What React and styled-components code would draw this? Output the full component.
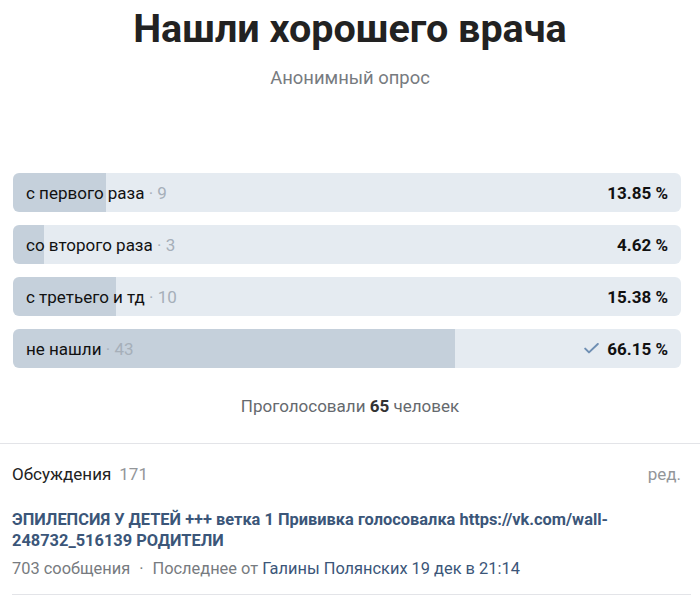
import React from "react";
import styled, { createGlobalStyle } from "styled-components";

const Global = createGlobalStyle`
  html, body { margin: 0; padding: 0; background: #fff; }
  body { font-family: Roboto, "Noto Sans", Arial, sans-serif; -webkit-font-smoothing: antialiased; }
  * { box-sizing: border-box; }
`;

const Page = styled.div`
  width: 700px;
  display: flex;
  flex-direction: column;
`;

const Header = styled.header`
  display: flex;
  flex-direction: column;
  align-items: center;
  padding-top: 7px;
`;

const Title = styled.h1`
  margin: 0;
  font-size: 39.5px;
  line-height: 44px;
  font-weight: 700;
  color: #222;
`;

const Subtitle = styled.div`
  margin-top: 17px;
  font-size: 18.4px;
  line-height: 20px;
  color: #777b80;
`;

const Options = styled.div`
  display: flex;
  flex-direction: column;
  gap: 13px;
  margin: 85px 19px 0 13px;
`;

const Option = styled.div`
  height: 39px;
  border-radius: 6px;
  display: flex;
  align-items: center;
  padding: 0 13px;
  background: linear-gradient(
    to right,
    #c5d0db ${(p) => p.$pct}%,
    #e5ebf1 ${(p) => p.$pct}%
  );
`;

const Label = styled.span`
  flex: 1;
  font-size: 17px;
  color: #111;
`;

const Count = styled.span`
  color: #a6afb9;
`;

const Percent = styled.span`
  display: flex;
  align-items: center;
  gap: 8px;
  font-size: 17px;
  font-weight: 700;
  color: #111;
`;

const Voted = styled.div`
  margin-top: 28px;
  text-align: center;
  font-size: 17px;
  line-height: 20px;
  color: #65696e;
  b { color: #333; font-weight: 700; }
`;

const Divider = styled.div`
  height: 1px;
  background: #e3e4e8;
  margin: ${(p) => p.$margin || "0"};
`;

const SectionHead = styled.div`
  display: flex;
  justify-content: space-between;
  align-items: center;
  padding: 0 19px 0 12px;
  margin-top: 20px;
  font-size: 17px;
  line-height: 20px;
`;

const SectionTitle = styled.span`
  color: #222;
`;

const SectionCount = styled.span`
  color: #939699;
  margin-left: 8px;
`;

const Edit = styled.span`
  color: #939699;
`;

const Topic = styled.div`
  padding: 0 19px 0 12px;
  margin-top: 25px;
`;

const TopicTitle = styled.div`
  font-size: 16.4px;
  line-height: 21px;
  font-weight: 700;
  color: #3b5679;
`;

const Meta = styled.div`
  margin-top: 8px;
  font-size: 16.4px;
  line-height: 20px;
  color: #777b80;
`;

const Dot = styled.span`
  margin: 0 9px;
`;

const MetaLink = styled.span`
  color: #3b5679;
`;

const Check = () => (
  <svg width="15" height="11" viewBox="0 0 15 11" fill="none">
    <path d="M1.2 5.6 L5 9.4 L13.8 1" stroke="#6f8fb3" strokeWidth="2" strokeLinecap="round" strokeLinejoin="round" />
  </svg>
);

const options = [
  { label: "с первого раза", count: 9, pct: 13.85 },
  { label: "со второго раза", count: 3, pct: 4.62 },
  { label: "с третьего и тд", count: 10, pct: 15.38 },
  { label: "не нашли", count: 43, pct: 66.15, chosen: true },
];

export default function App() {
  return (
    <Page>
      <Global />
      <Header>
        <Title>Нашли хорошего врача</Title>
        <Subtitle>Анонимный опрос</Subtitle>
      </Header>
      <Options>
        {options.map((o) => (
          <Option key={o.label} $pct={o.pct}>
            <Label>
              {o.label} <Count>· {o.count}</Count>
            </Label>
            <Percent>
              {o.chosen && <Check />}
              {o.pct.toFixed(2)} %
            </Percent>
          </Option>
        ))}
      </Options>
      <Voted>
        Проголосовали <b>65</b> человек
      </Voted>
      <Divider $margin="27px 0 0 0" />
      <SectionHead>
        <span>
          <SectionTitle>Обсуждения</SectionTitle>
          <SectionCount>171</SectionCount>
        </span>
        <Edit>ред.</Edit>
      </SectionHead>
      <Topic>
        <TopicTitle>
          ЭПИЛЕПСИЯ У ДЕТЕЙ +++ ветка 1 Прививка голосовалка https://vk.com/wall-<wbr />248732_516139 РОДИТЕЛИ
        </TopicTitle>
        <Meta>
          703 сообщения<Dot>·</Dot>Последнее от <MetaLink>Галины Полянских 19 дек в 21:14</MetaLink>
        </Meta>
      </Topic>
      <Divider $margin="15px 9px 0 12px" />
    </Page>
  );
}
